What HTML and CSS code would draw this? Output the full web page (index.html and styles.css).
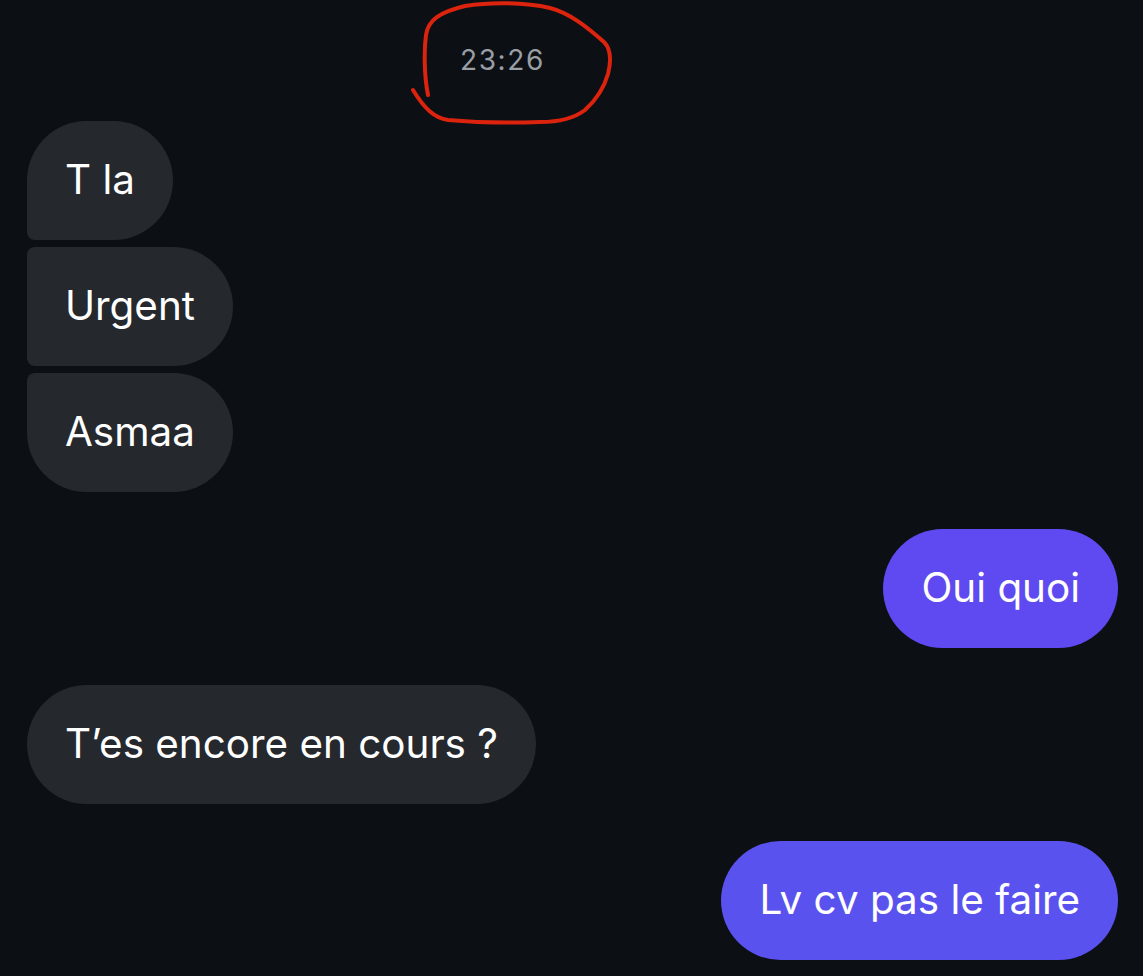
FILE: index.html
```html
<!DOCTYPE html>
<html>
  <head>
    <title>Messages</title>
    <link rel="stylesheet" href="styles.css">
  </head>
  <body>
    <div class="thread">
      <!-- heure, entourée au feutre rouge -->
      <div class="stamp">
        <span class="stamp-text">23:26</span>
        <svg class="scribble" width="210" height="130" viewBox="405 0 210 130">
          <path d="M428 95 C424 75 424 50 426 35 C428 20 440 12 465 6 C490 2 525 2 550 8 C570 13 588 28 604 42 C612 50 611 62 608 74 C604 88 596 100 585 110 C572 120 555 122 540 122 C510 123 470 122 448 120 C434 118 424 108 413 90"
                fill="none" stroke="#dc230e" stroke-width="4" stroke-linecap="round" stroke-linejoin="round"/>
        </svg>
      </div>

      <div class="group">
        <div class="bubble in first">T la</div>
        <div class="bubble in middle">Urgent</div>
        <div class="bubble in last">Asmaa</div>
      </div>

      <div class="bubble out">Oui quoi</div>

      <div class="bubble in">T’es encore en cours ?</div>

      <div class="bubble out alt">Lv cv pas le faire</div>
    </div>
  </body>
</html>
```

FILE: styles.css
```css
/* fil de discussion, mode sombre */
body {
  margin: 0;
  background-color: #0c0f13;
  font-family: Inter, "Noto Sans", sans-serif;
}

.thread {
  display: flex;
  flex-direction: column;
  align-items: flex-start;
  gap: 37px;
  padding: 0 25px 0 27px;
}

.stamp {
  position: relative;
  align-self: stretch;
  height: 119px;
  display: flex;
  align-items: center;
  padding-left: 433px;
  margin-bottom: -35px;
}

.stamp-text {
  color: #9a9ea6;
  font-size: 28px;
  letter-spacing: 1.6px;
}

.scribble {
  position: absolute;
  top: 0;
  left: 378px;
}

.group {
  display: flex;
  flex-direction: column;
  align-items: flex-start;
  gap: 7px;
}

.bubble {
  color: #ffffff;
  font-size: 40.4px;
  line-height: 48px;
  padding: 35px 38px 36px 38px;
  border-radius: 60px;
  white-space: nowrap;
}

.in {
  background-color: #25282d;
}

.in.first {
  border-bottom-left-radius: 8px;
}

.in.middle {
  border-top-left-radius: 8px;
  border-bottom-left-radius: 8px;
}

.in.last {
  border-top-left-radius: 8px;
}

.out {
  align-self: flex-end;
  background-color: #5e4af0;
}

.out.alt {
  background-color: #5a52ef;
}
```
